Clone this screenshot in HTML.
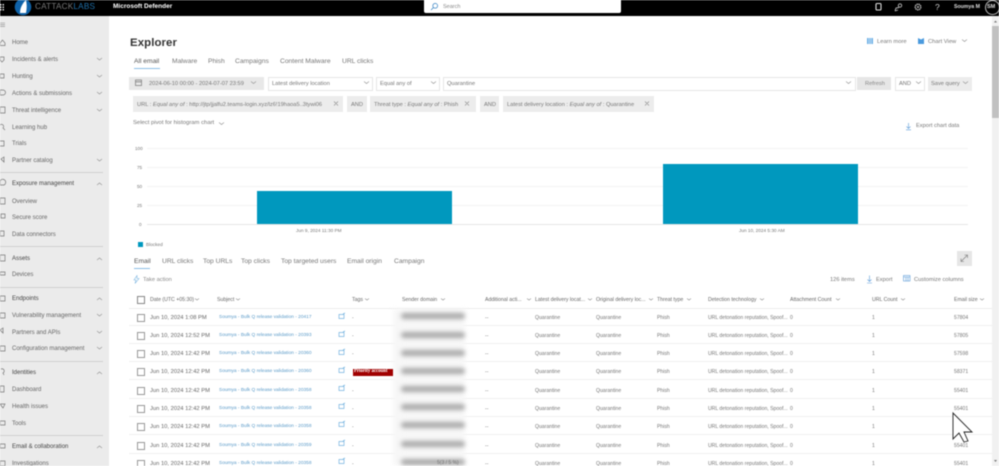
<!DOCTYPE html>
<html><head><meta charset="utf-8"><title>Explorer</title>
<style>
html,body{margin:0;padding:0;width:999px;height:466px;overflow:hidden;background:#fff}
#w{position:absolute;left:0;top:0;width:999px;height:466px;overflow:hidden;font-family:"Liberation Sans",sans-serif;color:#6a6a6a;filter:blur(.45px)}
#w div,#w span,#w svg{position:absolute}
.t{white-space:nowrap;line-height:10px;height:10px}
.s{font-size:6px;left:12px;color:#666;margin-top:1px}
.b{color:#444}
.tab{font-size:6.700px;color:#777;top:57px}
.tb{font-size:6.700px;color:#777;top:257px}
.h{font-size:5.200px;top:295px;color:#666}
.d{position:absolute;background:#d0d0d0;height:1px;left:0;width:103px}
.c{fill:none;stroke:#999;stroke-width:.7}
.r{left:129px;width:863px;height:17px;border-bottom:1px solid #f0f0f0}
.r span{top:5px;font-size:5.100px;line-height:10px;white-space:nowrap;color:#777}
.r .dt{left:21px;font-size:5.800px;color:#666}
.r .sb{left:90px;color:#5a9ac8;font-size:4.800px}
.r .cb{left:8px;top:6px;width:5.500px;height:5.500px;border:.7px solid #999}
.blur{left:401px;width:64px;height:6px;background:#a8a8a8;filter:blur(2.300px);border-radius:3px}
.chip{background:#ececec;top:96px;height:16px}
.cht{top:99.500px;font-size:5.700px;color:#777}
.g{left:147px;width:821px;height:1px;background:#f3f3f3}
.y{font-size:4.600px;left:135px;color:#777;margin-top:1px}
.ic{stroke:#777;fill:none;stroke-width:.7}
</style></head><body>
<div id="w">
<div style="left:0;top:0;width:999px;height:16px;background:#000"></div>
<svg style="left:0;top:3px" width="6" height="9"><g fill="#ddd"><rect x="0" y="1" width="1.500" height="1.500"/><rect x="2.500" y="1" width="1.500" height="1.500"/><rect x="0" y="3.500" width="1.500" height="1.500"/><rect x="2.500" y="3.500" width="1.500" height="1.500"/><rect x="0" y="6" width="1.500" height="1.500"/><rect x="2.500" y="6" width="1.500" height="1.500"/></g></svg>
<svg style="left:14px;top:-1px" width="19" height="17"><circle cx="9" cy="8" r="8.300" fill="#0f62a8"/><path d="M6 14 C6 9 8 6 10 3 L12 1 L12.500 4 C13 8 12.500 11 12 14 Z" fill="#fff"/></svg>
<span class="t" style="left:35px;top:2px;font-size:8.200px;color:#777;letter-spacing:.2px">CATTACK<b style="color:#1f6fa8;font-weight:normal">LABS</b></span>
<span class="t" style="left:113px;top:2px;font-size:6.500px;color:#fff;font-weight:bold">Microsoft Defender</span>
<div style="left:424px;top:0;width:197px;height:13px;background:#fff;border-radius:0 0 2px 2px"></div>
<svg style="left:430px;top:2px" width="9" height="9"><circle cx="5.200" cy="3.800" r="2.400" fill="none" stroke="#2b7cc0" stroke-width=".7"/><path d="M3.400 5.600 L1 8" stroke="#2b7cc0" stroke-width=".7"/></svg>
<span class="t" style="left:443px;top:2px;font-size:5.500px;color:#888">Search</span>
<svg style="left:873px;top:2px" width="12" height="12"><rect x="3" y="1.500" width="5" height="6.500" rx="1" fill="none" stroke="#ddd" stroke-width="1.100"/></svg>
<svg style="left:893px;top:2px" width="12" height="12"><circle cx="7" cy="3.500" r="1.700" fill="none" stroke="#bbb" stroke-width=".9"/><path d="M2 9 L3 6 L6 5.500 M2 9 L5 8" stroke="#bbb" stroke-width=".9" fill="none"/></svg>
<svg style="left:912px;top:1px" width="12" height="12"><circle cx="6" cy="6" r="2.800" fill="none" stroke="#bbb" stroke-width="1.400" stroke-dasharray="1.400 .5"/><circle cx="6" cy="6" r="1" fill="#bbb"/></svg>
<span class="t" style="left:935px;top:2px;font-size:8.500px;color:#ccc">?</span>
<span class="t" style="left:954px;top:2px;font-size:5.200px;color:#ddd;font-weight:bold">Soumya M</span>
<div style="left:985px;top:0;width:13px;height:13px;border:1px solid #bbb;border-radius:50%"></div>
<span class="t" style="left:987px;top:2px;font-size:5.500px;color:#ddd;font-weight:bold">SM</span>

<div style="left:0;top:16px;width:109px;height:450px;background:#ebebeb"></div>
<svg style="left:0;top:22px" width="6" height="6"><path d="M0 1H5M0 2.700H5M0 4.400H5" stroke="#888" stroke-width=".6"/></svg>
<span class="t s" style="top:37px">Home</span>
<span class="t s" style="top:54px">Incidents &amp; alerts</span>
<span class="t s" style="top:71px">Hunting</span>
<span class="t s" style="top:88px">Actions &amp; submissions</span>
<span class="t s" style="top:105px">Threat intelligence</span>
<span class="t s" style="top:122px">Learning hub</span>
<span class="t s" style="top:138px">Trials</span>
<span class="t s" style="top:155px">Partner catalog</span>
<div class="d" style="top:172px"></div>
<span class="t s b" style="top:178px">Exposure management</span>
<span class="t s" style="top:196px">Overview</span>
<span class="t s" style="top:212px">Secure score</span>
<span class="t s" style="top:229px">Data connectors</span>
<div class="d" style="top:246px"></div>
<span class="t s b" style="top:253px">Assets</span>
<span class="t s" style="top:269px">Devices</span>
<div class="d" style="top:287px"></div>
<span class="t s b" style="top:293px">Endpoints</span>
<span class="t s" style="top:310px">Vulnerability management</span>
<span class="t s" style="top:327px">Partners and APIs</span>
<span class="t s" style="top:343px">Configuration management</span>
<div class="d" style="top:361px"></div>
<span class="t s b" style="top:367px">Identities</span>
<span class="t s" style="top:384px">Dashboard</span>
<span class="t s" style="top:401px">Health issues</span>
<span class="t s" style="top:418px">Tools</span>
<div class="d" style="top:435px"></div>
<span class="t s b" style="top:441px">Email &amp; collaboration</span>
<span class="t s" style="top:458px">Investigations</span>
<svg style="left:0;top:0" width="109" height="466">
<g class="c"><path d="M97 58l2.500 2 2.500-2M97 75l2.500 2 2.500-2M97 92l2.500 2 2.500-2M97 109l2.500 2 2.500-2M97 159l2.500 2 2.500-2M97 185l2.500-2 2.500 2M97 260l2.500-2 2.500 2M97 300l2.500-2 2.500 2M97 314l2.500 2 2.500-2M97 331l2.500 2 2.500-2M97 347l2.500 2 2.500-2M97 374l2.500-2 2.500 2M97 448l2.500-2 2.500 2"/></g>
<g class="ic">
<path d="M0 43l2.500-3 2.500 3v2.500H0z"/><path d="M0 57h4v3l-2 2-2-2zM0 74h4v4H0zM0 90h3a2 2 0 1 1 0 5H0zM0 107h5v6H0zM0 125a2 2 0 1 1 3 3l2 2M0 141h4v5H0M1 159l3-2v5zM0 181a3 3 0 1 1 4 4H0zM0 198h5v6H0zM1 214h4v4H1zM0 231h4v5H0zM0 255h5v6H0zM0 272h5v3H0zM0 296h5v5H0zM0 313h5v5H0zM0 330l3-2v5zM0 346h5v5H0zM1 369a2 2 0 1 1 2 4l1 2M0 386h4v6H0zM0 404h5l-2 4zM0 421h5v4H0zM0 444h5v4H0zM0 461h5v5H0z"/>
</g></svg>

<span class="t" style="left:130px;top:38px;font-size:11.400px;color:#333;font-weight:bold;letter-spacing:.1px">Explorer</span>
<span class="t tab" style="left:134px;color:#555">All email</span>
<span class="t tab" style="left:172px">Malware</span>
<span class="t tab" style="left:208px">Phish</span>
<span class="t tab" style="left:235px">Campaigns</span>
<span class="t tab" style="left:280px">Content Malware</span>
<span class="t tab" style="left:342px">URL clicks</span>
<div style="left:134px;top:68px;width:26px;height:1px;background:#8dbfe6"></div>

<svg style="left:866px;top:37px" width="110" height="11"><rect x="1" y="1" width="6" height="6" fill="#6fb1e6"/><path d="M3 1v6M5 1v6" stroke="#fff" stroke-width=".6"/><path d="M52 1l3 1.500 3-1.500v6h-6z" fill="#4a9ade"/><path d="M96 2.500l2.500 2 2.500-2" class="c"/></svg>
<span class="t" style="left:877px;top:36.500px;font-size:5.800px;color:#777">Learn more</span>
<span class="t" style="left:928px;top:36.500px;font-size:5.800px;color:#777">Chart View</span>

<div style="left:129px;top:77px;width:135px;height:13px;background:#e8e8e8"></div>
<svg style="left:135px;top:79px" width="8" height="8"><rect x=".5" y="1" width="6" height="5.500" fill="none" stroke="#777" stroke-width=".7"/><path d="M.5 2.800h6" stroke="#777" stroke-width=".8"/></svg>
<span class="t" style="left:149px;top:78.500px;font-size:5.700px;color:#777">2024-06-10 00:00 - 2024-07-07 23:59</span>
<div style="left:268px;top:77px;width:103px;height:12px;border:1px solid #e6e6e6;background:#fff"></div>
<span class="t" style="left:272px;top:78.500px;font-size:5.700px;color:#777">Latest delivery location</span>
<div style="left:376px;top:77px;width:62px;height:12px;border:1px solid #e6e6e6;background:#fff"></div>
<span class="t" style="left:380px;top:78.500px;font-size:5.700px;color:#777">Equal any of</span>
<div style="left:443px;top:77px;width:411px;height:12px;border:1px solid #e6e6e6;background:#fff"></div>
<span class="t" style="left:447px;top:78.500px;font-size:5.700px;color:#777">Quarantine</span>
<div style="left:857px;top:77px;width:34px;height:13px;background:#e6e6e6"></div>
<span class="t" style="left:865px;top:78.500px;font-size:5.700px;color:#888">Refresh</span>
<div style="left:895px;top:77px;width:28px;height:12px;border:1px solid #e6e6e6;background:#fff"></div>
<span class="t" style="left:899px;top:78.500px;font-size:5.700px;color:#777">AND</span>
<div style="left:928px;top:77px;width:44px;height:14px;background:#ececec"></div>
<span class="t" style="left:931px;top:79px;font-size:5.700px;color:#777">Save query</span>

<div class="chip" style="left:133px;width:210px"></div>
<span class="t cht" style="left:137px">URL : <i>Equal any of</i> : http://jtp/jjalfu2.teams-login.xyz/lz6!19haoa5..3tywi06</span>
<div class="chip" style="left:347px;width:20px"></div><span class="t cht" style="left:351px">AND</span>
<div class="chip" style="left:370px;width:106px"></div>
<span class="t cht" style="left:374px">Threat type : <i>Equal any of</i> : Phish</span>
<div class="chip" style="left:480px;width:19px"></div><span class="t cht" style="left:484px">AND</span>
<div class="chip" style="left:503px;width:151px"></div>
<span class="t cht" style="left:507px">Latest delivery location : <i>Equal any of</i> : Quarantine</span>
<svg style="left:0;top:0" width="999" height="130"><path class="c" d="M251 81.500l2.500 2 2.500-2M364 81.500l2.500 2 2.500-2M431 81.500l2.500 2 2.500-2M846 81.500l2.500 2 2.500-2M916 81.500l2.500 2 2.500-2M963 81.500l2.500 2 2.500-2M219 122.500l2.500 2 2.500-2"/>
<path d="M334 101.500l4 4m0-4l-4 4M465 101.500l4 4m0-4l-4 4M645 101.500l4 4m0-4l-4 4" stroke="#888" stroke-width=".6"/></svg>
<span class="t" style="left:133px;top:118px;font-size:5.900px;color:#777">Select pivot for histogram chart</span>
<svg style="left:905px;top:122px" width="8" height="9"><path d="M3.500 1v5M1.500 4.500l2 2 2-2M1 7.800h5" stroke="#5a9ad8" stroke-width=".6" fill="none"/></svg>
<span class="t" style="left:916px;top:121px;font-size:5.700px;color:#777">Export chart data</span>

<div class="g" style="top:148px"></div><div class="g" style="top:167px"></div><div class="g" style="top:186px"></div><div class="g" style="top:205px"></div><div class="g" style="top:224px;background:#e6e6e6"></div>
<span class="t y" style="top:143px">100</span><span class="t y" style="top:162px;left:137px">75</span><span class="t y" style="top:181px;left:137px">50</span><span class="t y" style="top:200px;left:137px">25</span><span class="t y" style="top:219px;left:139px">0</span>
<div style="left:257px;top:191px;width:195px;height:33px;background:#0098be"></div>
<div style="left:663px;top:163.500px;width:195px;height:60.500px;background:#0098be"></div>
<span class="t" style="left:296px;top:226px;font-size:4.700px;color:#777">Jun 9, 2024 11:30 PM</span>
<span class="t" style="left:739px;top:226px;font-size:4.700px;color:#777">Jun 10, 2024 5:30 AM</span>
<div style="left:138px;top:242px;width:5px;height:5px;background:#0098be"></div>
<span class="t" style="left:146px;top:240px;font-size:4.700px;color:#777">Blocked</span>

<span class="t tb" style="left:134px;color:#555">Email</span>
<span class="t tb" style="left:162px">URL clicks</span>
<span class="t tb" style="left:203px">Top URLs</span>
<span class="t tb" style="left:241px">Top clicks</span>
<span class="t tb" style="left:281px">Top targeted users</span>
<span class="t tb" style="left:347px">Email origin</span>
<span class="t tb" style="left:394px">Campaign</span>
<div style="left:134px;top:268px;width:16px;height:1px;background:#8dbfe6"></div>
<div style="left:957px;top:251px;width:15px;height:15px;background:#e6e6e6"></div>
<svg style="left:960px;top:254px" width="9" height="9"><path d="M1 7.500L7.500 1M4.500 1h3v3M1 4.500v3h3" stroke="#777" stroke-width=".6" fill="none"/></svg>
<svg style="left:133px;top:275px" width="7" height="9"><path d="M4 .5L1 5h2L2 8.500 6 3.500H4z" fill="none" stroke="#7ab4e0" stroke-width=".6"/></svg>
<span class="t" style="left:143px;top:274.500px;font-size:5.700px;color:#888">Take action</span>
<span class="t" style="left:830px;top:274.500px;font-size:5.700px;color:#777">126 items</span>
<svg style="left:866px;top:275px" width="7" height="9"><path d="M3.500 .5v5.500M1.500 4.500l2 2 2-2M1 8h5" stroke="#5a9ad8" stroke-width=".6" fill="none"/></svg>
<span class="t" style="left:876px;top:274.500px;font-size:5.700px;color:#777">Export</span>
<svg style="left:903px;top:275px" width="8" height="8"><rect x=".5" y=".5" width="6.500" height="5.500" fill="none" stroke="#5a9ad8" stroke-width=".6"/><path d="M.5 2h6.500M3 2v4M5 2v4" stroke="#5a9ad8" stroke-width=".6"/></svg>
<span class="t" style="left:914px;top:274.500px;font-size:5.700px;color:#777">Customize columns</span>

<div style="left:136.500px;top:296px;width:6px;height:6px;border:.7px solid #888"></div>
<span class="t h" style="left:150px">Date (UTC +05:30)</span>
<span class="t h" style="left:217px">Subject</span>
<span class="t h" style="left:352px">Tags</span>
<span class="t h" style="left:402px">Sender domain</span>
<span class="t h" style="left:485px">Additional acti...</span>
<span class="t h" style="left:535px">Latest delivery locat...</span>
<span class="t h" style="left:596px">Original delivery loc...</span>
<span class="t h" style="left:657px">Threat type</span>
<span class="t h" style="left:708px">Detection technology</span>
<span class="t h" style="left:790px">Attachment Count</span>
<span class="t h" style="left:872px">URL Count</span>
<span class="t h" style="left:954px">Email size</span>
<svg style="left:0;top:296px" width="999" height="8"><path class="c" d="M195 2.500l2 1.500 2-1.500M236 2.500l2 1.500 2-1.500M365 2.500l2 1.500 2-1.500M441 2.500l2 1.500 2-1.500M527 2.500l2 1.500 2-1.500M588 2.500l2 1.500 2-1.500M649 2.500l2 1.500 2-1.500M687 2.500l2 1.500 2-1.500M760 2.500l2 1.500 2-1.500M836 2.500l2 1.500 2-1.500M901 2.500l2 1.500 2-1.500M980 2.500l2 1.500 2-1.500"/></svg>
<div style="left:129px;top:308px;width:863px;height:1px;background:#ececec"></div>

<div class="r" style="top:308px"><span class="cb"></span><span class="dt">Jun 10, 2024 1:08 PM</span><span class="sb">Soumya - Bulk Q release validation - 20417</span><span style="left:223px">-</span><span style="left:356px">--</span><span style="left:406px">Quarantine</span><span style="left:467px">Quarantine</span><span style="left:528px">Phish</span><span style="left:579px">URL detonation reputation, Spoof...</span><span style="left:661px">0</span><span style="left:743px">1</span><span style="left:825px">57804</span></div>
<div class="r" style="top:326px"><span class="cb"></span><span class="dt">Jun 10, 2024 12:52 PM</span><span class="sb">Soumya - Bulk Q release validation - 20393</span><span style="left:223px">-</span><span style="left:356px">--</span><span style="left:406px">Quarantine</span><span style="left:467px">Quarantine</span><span style="left:528px">Phish</span><span style="left:579px">URL detonation reputation, Spoof...</span><span style="left:661px">0</span><span style="left:743px">1</span><span style="left:825px">57805</span></div>
<div class="r" style="top:344px"><span class="cb"></span><span class="dt">Jun 10, 2024 12:42 PM</span><span class="sb">Soumya - Bulk Q release validation - 20360</span><span style="left:223px">-</span><span style="left:356px">--</span><span style="left:406px">Quarantine</span><span style="left:467px">Quarantine</span><span style="left:528px">Phish</span><span style="left:579px">URL detonation reputation, Spoof...</span><span style="left:661px">0</span><span style="left:743px">1</span><span style="left:825px">57598</span></div>
<div class="r" style="top:362px"><span class="cb"></span><span class="dt">Jun 10, 2024 12:42 PM</span><span class="sb">Soumya - Bulk Q release validation - 20360</span><span style="left:356px">--</span><span style="left:406px">Quarantine</span><span style="left:467px">Quarantine</span><span style="left:528px">Phish</span><span style="left:579px">URL detonation reputation, Spoof...</span><span style="left:661px">0</span><span style="left:743px">1</span><span style="left:825px">58371</span></div>
<div class="r" style="top:381px"><span class="cb"></span><span class="dt">Jun 10, 2024 12:42 PM</span><span class="sb">Soumya - Bulk Q release validation - 20358</span><span style="left:223px">-</span><span style="left:356px">--</span><span style="left:406px">Quarantine</span><span style="left:467px">Quarantine</span><span style="left:528px">Phish</span><span style="left:579px">URL detonation reputation, Spoof...</span><span style="left:661px">0</span><span style="left:743px">1</span><span style="left:825px">55401</span></div>
<div class="r" style="top:399px"><span class="cb"></span><span class="dt">Jun 10, 2024 12:42 PM</span><span class="sb">Soumya - Bulk Q release validation - 20358</span><span style="left:223px">-</span><span style="left:356px">--</span><span style="left:406px">Quarantine</span><span style="left:467px">Quarantine</span><span style="left:528px">Phish</span><span style="left:579px">URL detonation reputation, Spoof...</span><span style="left:661px">0</span><span style="left:743px">1</span><span style="left:825px">55401</span></div>
<div class="r" style="top:417px"><span class="cb"></span><span class="dt">Jun 10, 2024 12:42 PM</span><span class="sb">Soumya - Bulk Q release validation - 20358</span><span style="left:223px">-</span><span style="left:356px">--</span><span style="left:406px">Quarantine</span><span style="left:467px">Quarantine</span><span style="left:528px">Phish</span><span style="left:579px">URL detonation reputation, Spoof...</span><span style="left:661px">0</span><span style="left:743px">1</span></div>
<div class="r" style="top:436px"><span class="cb"></span><span class="dt">Jun 10, 2024 12:42 PM</span><span class="sb">Soumya - Bulk Q release validation - 20359</span><span style="left:223px">-</span><span style="left:356px">--</span><span style="left:406px">Quarantine</span><span style="left:467px">Quarantine</span><span style="left:528px">Phish</span><span style="left:579px">URL detonation reputation, Spoof...</span><span style="left:661px">0</span><span style="left:743px">1</span><span style="left:825px">55401</span></div>
<div class="r" style="top:454px"><span class="cb"></span><span class="dt">Jun 10, 2024 12:42 PM</span><span class="sb">Soumya - Bulk Q release validation - 20358</span><span style="left:223px">-</span><span style="left:356px">--</span><span style="left:406px">Quarantine</span><span style="left:467px">Quarantine</span><span style="left:528px">Phish</span><span style="left:579px">URL detonation reputation, Spoof...</span><span style="left:661px">0</span><span style="left:743px">1</span><span style="left:825px">55401</span></div>

<svg style="left:338px;top:308px" width="12" height="158"><g fill="none" stroke="#74b3e0" stroke-width=".7"><path d="M1 6.500h5v4H1zM5 6l2-1"/><path d="M1 24.500h5v4H1zM5 24l2-1"/><path d="M1 42.500h5v4H1zM5 42l2-1"/><path d="M1 60.500h5v4H1zM5 60l2-1"/><path d="M1 78.500h5v4H1zM5 78l2-1"/><path d="M1 96.500h5v4H1zM5 96l2-1"/><path d="M1 114.500h5v4H1zM5 114l2-1"/><path d="M1 133.500h5v4H1zM5 133l2-1"/><path d="M1 151.500h5v4H1zM5 151l2-1"/></g></svg>
<div style="left:393px;top:309px;width:72px;height:157px;background:#f7f7f7;filter:blur(2px)"></div>
<div class="blur" style="top:313px"></div><div class="blur" style="top:332px"></div><div class="blur" style="top:350px"></div><div class="blur" style="top:368px"></div><div class="blur" style="top:386px"></div><div class="blur" style="top:404px"></div><div class="blur" style="top:422px"></div><div class="blur" style="top:441px"></div><div class="blur" style="top:459px"></div>
<span class="t" style="left:437px;top:458px;font-size:5px;color:#777">5(3 / 5 %)</span>
<div style="left:352.500px;top:368.500px;width:40px;height:7px;background:#a00000;overflow:hidden"></div>
<span class="t" style="left:354px;top:367px;font-size:4.800px;color:#fff;font-weight:bold;font-family:'Liberation Serif',serif">Priority account</span>

<div style="left:992px;top:16px;width:7px;height:450px;background:#f1f1f1"></div>
<div style="left:992px;top:26px;width:7px;height:92px;background:#c1c1c1"></div>
<svg style="left:992px;top:18px" width="7" height="450"><path d="M2 4.500l1.500-2 1.500 2z" fill="#777"/><path d="M2 442l1.500 2 1.500-2z" fill="#777"/></svg>
<svg style="left:950px;top:410px" width="26" height="36"><path d="M3 3V29L9 23L14 32L18 31L14 22H22Z" fill="#fff" stroke="#222" stroke-width=".9"/></svg>
</div>
</body></html>
